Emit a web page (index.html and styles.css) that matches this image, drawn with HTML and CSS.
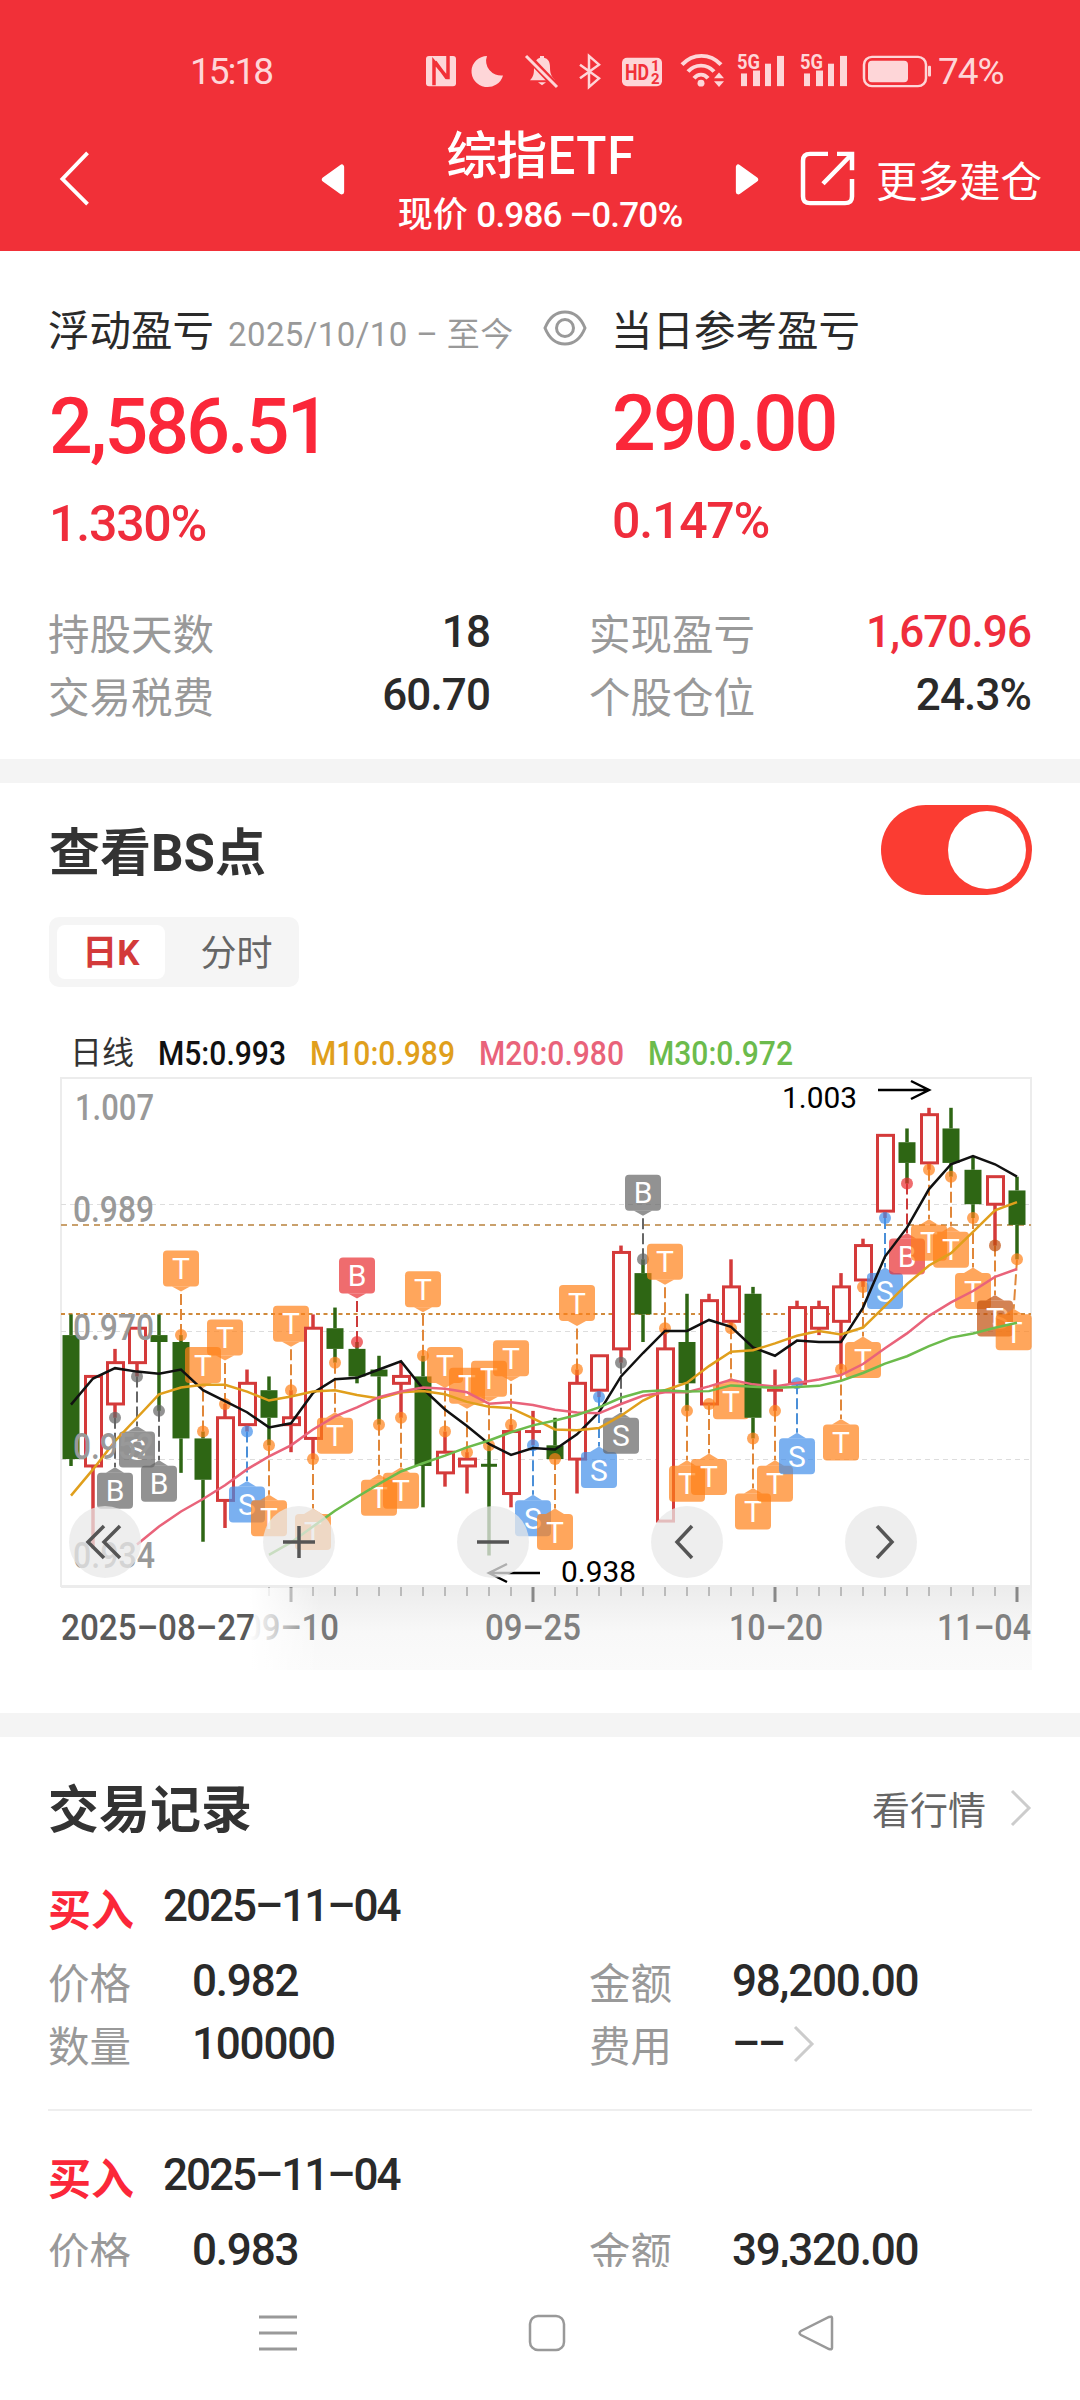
FILE: index.html
```html
<!DOCTYPE html>
<html lang="zh-CN">
<head>
  <meta charset="UTF-8">
  <title>综指ETF</title>
  <link rel="stylesheet" href="styles.css">
</head>
<body>
<div class="screen">
  <header class="header">
    <div class="status">
      <span class="time">15:18</span>
      <svg class="status-icons" width="510" height="39" viewBox="422 54 510 40" preserveAspectRatio="none">
        <g fill="#fed6d8">
          <rect x="426" y="58" width="30" height="31" rx="3"/>
          <path d="M487 58a16 16 0 1 0 16 20a15 15 0 0 1-16-20z"/>
          <path d="M530 83c4-4 4-8 4-13 0-6 3-9 6-10v-2h4v2c4 1 6 4 6 10 0 5 1 9 5 13z"/>
          <path d="M538 85h8l-4 3z"/>
          <rect x="622" y="60" width="40" height="29" rx="5"/>
          <circle cx="701" cy="86" r="3.5"/>
          <path d="M714 81l5-6 5 6zM714 84l5 6 5-6z"/>
          <rect x="741" y="76" width="6" height="13"/><rect x="753" y="73" width="7" height="16"/><rect x="765" y="66" width="6" height="23"/><rect x="777" y="58" width="7" height="31"/>
          <rect x="804" y="76" width="6" height="13"/><rect x="816" y="73" width="7" height="16"/><rect x="828" y="66" width="6" height="23"/><rect x="840" y="58" width="7" height="31"/>
          <rect x="868" y="63" width="40" height="22" rx="4"/>
          <rect x="928" y="68" width="3" height="11" rx="1"/>
        </g>
        <g fill="none" stroke="#fed6d8" stroke-width="3">
          <path d="M580 67l19 14-10 9V58l10 9-19 14" stroke-width="2.5"/>
          <path d="M682 67c11-12 28-12 39 0M688 74c7-8 19-8 26 0M694 81c4-5 10-5 14 0" stroke-width="4"/>
          <rect x="864" y="59" width="62" height="30" rx="8" stroke-width="2.5"/>
        </g>
        <path d="M528 59l29 31" stroke="#f13038" stroke-width="7"/>
        <path d="M526 58l31 32" stroke="#fed6d8" stroke-width="3"/>
        <path d="M434 88V64l13 16M448 58v24M435 64l12 17" fill="none" stroke="#f13038" stroke-width="3.5"/>
        <g class="tiny-text" fill="#f13038">
          <text x="625" y="83" font-size="23" textLength="24" lengthAdjust="spacingAndGlyphs">HD</text>
          <text x="651" y="74" font-size="15">1</text>
          <text x="651" y="87" font-size="15">2</text>
        </g>
        <g class="tiny-text" fill="#fed6d8" font-size="20">
          <text x="737" y="71" textLength="23" lengthAdjust="spacingAndGlyphs">5G</text>
          <text x="800" y="71" textLength="23" lengthAdjust="spacingAndGlyphs">5G</text>
        </g>
      </svg>
      <span class="battery">74%</span>
    </div>
    <nav class="navbar">
      <svg class="back" width="32" height="56" viewBox="0 0 32 58"><path d="M29 2L3 29l26 26" fill="none" stroke="#fff" stroke-width="4"/></svg>
      <svg class="prev" width="24" height="31" viewBox="0 0 24 32"><path d="M21 3v26L3 16z" fill="#fff" stroke="#fff" stroke-width="5" stroke-linejoin="round"/></svg>
      <div class="stock">
        <h1>综指ETF</h1>
        <p>现价 <span>0.986 –0.70%</span></p>
      </div>
      <svg class="next" width="24" height="31" viewBox="0 0 24 32"><path d="M3 3v26l18-13z" fill="#fff" stroke="#fff" stroke-width="5" stroke-linejoin="round"/></svg>
      <svg class="share" width="56" height="56" viewBox="0 0 56 58" preserveAspectRatio="none"><path d="M28 3H10q-7 0-7 7v37q0 7 7 7h35q7 0 7-7V29M37 3h15v17M52 3L23 34" fill="none" stroke="#fff" stroke-width="4.5"/></svg>
      <span class="more">更多建仓</span>
    </nav>
  </header>

  <section class="summary">
    <div class="profit">
      <div class="profit-col">
        <div class="profit-title">浮动盈亏 <small><span>2025/10/10 –</span> 至今</small>
          <svg width="44" height="38" viewBox="0 0 44 38" fill="none" stroke="#999" stroke-width="3"><path d="M2 19C6 9 13 3 22 3s16 6 20 16c-4 10-11 16-20 16S6 29 2 19z"/><circle cx="22" cy="19" r="8.500"/></svg>
        </div>
        <div class="amount">2,586.51</div>
        <div class="rate">1.330%</div>
      </div>
      <div class="profit-col today">
        <div class="profit-title">当日参考盈亏</div>
        <div class="amount">290.00</div>
        <div class="rate">0.147%</div>
      </div>
    </div>
    <div class="details">
      <div class="detail"><span>持股天数</span><b>18</b></div>
      <div class="detail"><span>实现盈亏</span><b class="red">1,670.96</b></div>
      <div class="detail"><span>交易税费</span><b>60.70</b></div>
      <div class="detail"><span>个股仓位</span><b>24.3%</b></div>
    </div>
  </section>

  <section class="bs">
    <div class="bs-head">
      <h2>查看BS点</h2>
      <div class="switch"><i></i></div>
    </div>
    <div class="tabs">
      <span class="tab active">日K</span>
      <span class="tab">分时</span>
    </div>
    <svg id="chart" class="chart" width="984" height="650" viewBox="49 1030 984 650"></svg>
  </section>

  <section class="trades">
    <div class="trades-head">
      <h2>交易记录</h2>
      <span>看行情</span>
      <svg width="22" height="38" viewBox="0 0 22 38"><path d="M2 2l17 17L2 36" fill="none" stroke="#ccc" stroke-width="3"/></svg>
    </div>
    <div class="trade">
      <div class="trade-title"><strong>买入</strong><span>2025–11–04</span></div>
      <div class="trade-grid">
        <span>价格</span><b>0.982</b><span>金额</span><b>98,200.00</b>
        <span>数量</span><b>100000</b><span>费用</span><b class="fee">–– <svg width="22" height="38" viewBox="0 0 22 38"><path d="M2 2l17 17L2 36" fill="none" stroke="#ccc" stroke-width="3"/></svg></b>
      </div>
    </div>
    <div class="trade">
      <div class="trade-title"><strong>买入</strong><span>2025–11–04</span></div>
      <div class="trade-grid">
        <span>价格</span><b>0.983</b><span>金额</span><b>39,320.00</b>
      </div>
    </div>
  </section>

  <footer class="system-nav">
    <svg width="38" height="38" viewBox="0 0 38 38"><path d="M0 3h38M0 19h38M0 35h38" stroke="#999" stroke-width="3"/></svg>
    <svg width="38" height="38" viewBox="0 0 38 38"><rect x="2" y="2" width="34" height="34" rx="8" fill="none" stroke="#999" stroke-width="2.500"/></svg>
    <svg width="38" height="38" viewBox="0 0 38 38"><path d="M35 4v30q0 2-3 1L4 21q-3-2 0-4L32 3q3-1 3 1z" fill="none" stroke="#999" stroke-width="2.500"/></svg>
  </footer>
</div>
<script src="chart.js"></script>
</body>
</html>
```
FILE: styles.css
```css
* {
  box-sizing: border-box;
}
body {
  margin: 0;
  background: #fff;
  color: #2a2a2a;
  font-family: Roboto, "Noto Sans CJK SC", sans-serif;
}
h1, h2, p {
  margin: 0;
}
svg {
  flex: none;
}
.screen {
  width: 1080px;
  height: 2400px;
  overflow: hidden;
  display: flex;
  flex-direction: column;
}

/* header */
.header {
  flex: none;
  height: 251px;
  background: #f13038;
  color: #fff;
}
.status {
  display: flex;
  align-items: center;
  height: 119px;
  padding: 24px 0 0 190px;
  color: #fed6d8;
  font-size: 37px;
}
.time {
  width: 232px;
  letter-spacing: -2px;
}
.battery {
  margin-left: 6px;
  letter-spacing: -1px;
}
.tiny-text {
  font-weight: 700;
}
.navbar {
  display: flex;
  align-items: center;
  height: 120px;
  padding-left: 59px;
}
.prev {
  margin-left: 230px;
}
.stock {
  width: 390px;
  text-align: center;
  white-space: nowrap;
}
.stock h1 {
  height: 66px;
  font: 500 51px/62px "Noto Sans CJK SC", sans-serif;
  letter-spacing: -1px;
}
.stock p {
  height: 50px;
  line-height: 58px;
  font-size: 35px;
  font-weight: 500;
}
.stock p span {
  letter-spacing: -.8px;
}
.share {
  margin-left: 41px;
}
.more {
  margin-left: 20px;
  font-size: 41.500px;
  white-space: nowrap;
}

/* profit summary */
.summary {
  flex: none;
  height: 532px;
  padding: 47px 48px 0;
  border-bottom: 24px solid #f4f4f4;
}
.profit {
  display: flex;
  height: 302px;
}
.profit-col {
  flex: none;
  width: 563px;
  white-space: nowrap;
}
.profit-title {
  display: flex;
  align-items: center;
  height: 60px;
  font-size: 41.500px;
}
.profit-title small {
  margin: 8px 0 0 14px;
  color: #999;
  font-size: 33px;
  letter-spacing: .4px;
}
.profit-title svg {
  margin: 0 0 0 29px;
}
.amount {
  height: 135px;
  padding-left: 1px;
  line-height: 139px;
  color: #fb2739;
  font-size: 77px;
  font-weight: 500;
  letter-spacing: -2.800px;
}
.rate {
  height: 60px;
  padding-left: 1px;
  line-height: 62px;
  color: #ef2d3c;
  font-size: 50px;
  font-weight: 500;
  letter-spacing: -1.200px;
}
.today .amount, .today .rate {
  position: relative;
  top: -3px;
}
.details {
  display: grid;
  grid-template-columns: 442px 442px;
  column-gap: 99px;
}
.detail {
  display: flex;
  justify-content: space-between;
  align-items: center;
  height: 63px;
}
.detail span {
  color: #999;
  font-size: 41.500px;
}
.detail b {
  font-size: 44px;
  font-weight: 500;
  letter-spacing: -.900px;
}
.detail .red {
  color: #ef2d3c;
}

/* BS chart */
h2 {
  color: #333;
  font: 700 51px/60px Roboto, "Noto Sans CJK SC", sans-serif;
}
.bs {
  flex: none;
  height: 954px;
  padding: 22px 48px 0 49px;
  border-bottom: 24px solid #f4f4f4;
}
.bs-head {
  display: flex;
  justify-content: space-between;
  align-items: center;
  height: 90px;
}
.bs-head h2 {
  padding-top: 7px;
}
.switch {
  width: 151px;
  height: 90px;
  padding: 6px;
  border-radius: 45px;
  background: #fb3c32;
}
.switch i {
  display: block;
  width: 78px;
  height: 78px;
  margin-left: auto;
  border-radius: 50%;
  background: #fff;
}
.tabs {
  display: flex;
  width: 250px;
  height: 70px;
  margin: 22px 0 43px;
  padding: 8px;
  border-radius: 10px;
  background: #f5f5f5;
}
.tab {
  flex: 1;
  padding-left: 17px;
  color: #666;
  font-size: 36px;
  line-height: 58px;
  text-align: center;
}
.tab.active {
  flex: none;
  width: 108px;
  padding-left: 0;
  border-radius: 8px;
  background: #fff;
  color: #d33a3a;
  font-size: 35px;
  font-weight: 700;
}
.tab.active {
  height: 54px;
}
.chart {
  display: block;
}

/* trade list */
.trades {
  flex: none;
  height: 530px;
  padding: 0 48px;
  overflow: hidden;
}
.trades-head {
  display: flex;
  align-items: center;
  height: 146px;
  padding-bottom: 5px;
}
.trades-head h2 {
  flex: 1;
  padding-top: 7px;
}
.trades-head span {
  margin-right: 24px;
  color: #666;
  font-size: 38px;
}
.trade {
  height: 269px;
}
.trade + .trade {
  border-top: 2px solid #eee;
  margin-top: -43px;
  padding-top: 41px;
}
.trade-title {
  display: flex;
  align-items: center;
  height: 48px;
  font-size: 44px;
}
.trade-title strong {
  width: 115px;
  color: #fb2739;
  font-size: 43px;
}
.trade-title span {
  padding-bottom: 2px;
  font-weight: 500;
  letter-spacing: -2px;
}
.trade-grid {
  display: grid;
  grid-template-columns: 144px 397px 143px auto;
  grid-auto-rows: 63px;
  align-items: center;
  margin-top: 18px;
}
.trade-grid span {
  color: #999;
  font-size: 41.500px;
}
.trade-grid b {
  font-size: 44px;
  font-weight: 500;
  letter-spacing: -1.200px;
}
.fee {
  display: flex;
  align-items: center;
  gap: 9px;
}
.trade-grid .fee {
  letter-spacing: -2.500px;
}

/* android navigation */
.system-nav {
  display: flex;
  gap: 231px;
  padding: 47px 0 0 259px;
}
```
FILE: chart.js
```js
// high, open, close, low in 0.001; open > close is a falling day
const candles = [
  [973, 970, 952, 951], [964, 951, 964, 939], [968, 960, 966, 958], [971, 966, 971, 964],
  [973, 970, 969, 959], [970, 969, 955, 950], [956, 955, 949, 940], [960, 946, 958, 942],
  [965, 957, 963, 956], [964, 962, 958, 954], [962, 957, 958, 953], [973, 955, 971, 952],
  [974, 971, 968, 966], [969, 968, 964, 963], [967, 965, 964, 957], [966, 963, 964, 958],
  [967, 964, 951, 945], [956, 950, 953, 948], [953, 951, 952, 947], [954, 951.1, 951, 938],
  [957, 947, 956, 945], [959, 956, 956, 954], [958, 954, 952, 952], [965, 952, 963, 947],
  [967, 962, 967, 961], [983, 968, 982, 966], [981, 979, 973, 969], [971, 943, 968, 943],
  [976, 969, 963, 959], [976, 960, 975, 960], [981, 972, 977, 971], [977, 976, 958, 955],
  [965, 962, 962, 959], [975, 963, 974, 963], [975, 971, 974, 970], [979, 972, 977, 965],
  [984, 978, 983, 977], [999, 988, 999, 987], [1000, 998, 995, 992], [1003, 995, 1002, 994],
  [1003, 1000, 995, 993], [996, 994, 989, 987], [993, 989, 993, 983], [993, 991, 986, 981]
];

// index: letter + color + side (u = above the high, d = below the low)
const marks = {
  2: "Bgd", 3: "Sgd", 4: "Bgd", 5: "Tou", 6: "Tou", 7: "Tou", 8: "Sbd", 9: "Tod", 10: "Tou",
  11: "Tod", 12: "Tod", 13: "Bru", 14: "Tod", 15: "Tod", 16: "Tou", 17: "Tou", 18: "Tou",
  19: "Tou", 20: "Tou", 21: "Sbd", 22: "Tod", 23: "Tou", 24: "Sbd", 25: "Sgd", 26: "Bgu",
  27: "Tou", 28: "Tod", 29: "Tod", 30: "Tod", 31: "Tod", 32: "Tod", 33: "Sbd", 35: "Tod",
  36: "Tod", 37: "Sbd", 38: "Brd", 39: "Tod", 40: "Tod", 41: "Tod", 42: "Tmd", 43: "Tod"
};
const colors = {
  o: ["#ff8017", "#e0873a"], r: ["#e82e30", "#cc3a3a"], g: ["#646464", "#666"],
  b: ["#418eea", "#4a8fd8"], m: ["#c04e0c", "#e0873a"]
};

// first average values, which need closes from before the visible range
const averages = [
  { days: 5, color: "#111", start: 0, lead: [959.9, 963.7, 965.2, 964.7] },
  { days: 10, color: "#e09f1c", start: 0, lead: [946.7, 950.5, 954.6, 958, 961.4, 962.4, 962.8, 962.8, 961.8] },
  { days: 20, color: "#e9637a", start: 3, lead: [939.6, 942.2, 944.4, 946.2, 948.2, 950.5, 952.4, 954, 956.3, 958.2, 959.5, 961, 961.8, 962.4, 962.2, 961.7] },
  { days: 30, color: "#6cbb4c", start: 9, lead: [938.1, 939.9, 942.2, 944.5, 946.5, 948.4, 950.2, 951.4, 952.5, 953.7, 954.7, 955.9, 956.9, 957.6, 958.4, 959.5, 960.9, 961.8, 962, 961.8] }
];

const x = i => 71 + 22 * i;
const y = p => 1107.8 + (1003 - p) * 6.888;
let out = "";

function line(x1, y1, x2, y2, color, width, dash) {
  out += `<line x1="${x1}" y1="${y1}" x2="${x2}" y2="${y2}" stroke="${color}" stroke-width="${width}"${dash ? ` stroke-dasharray="${dash}"` : ""}/>`;
}

function text(str, tx, ty, size, width, color, weight) {
  out += `<text x="${tx}" y="${ty}" font-size="${size}" font-weight="${weight || 500}" fill="${color}" textLength="${width}" lengthAdjust="spacingAndGlyphs">${str}</text>`;
}

function drawFrame() {
  out += `<defs>
    <linearGradient id="axis" x2="0" y2="1"><stop stop-color="#ececec"/><stop offset=".55" stop-color="#f8f8f8"/><stop offset="1" stop-color="#fafafa"/></linearGradient>
    <linearGradient id="fade"><stop stop-color="#fff"/><stop offset=".73" stop-color="#fff"/><stop offset=".82" stop-color="#fff" stop-opacity=".7"/><stop offset="1" stop-color="#fff" stop-opacity="0"/></linearGradient>
  </defs>`;
  text("日线", 70, 1064, 32, 64, "#333", 400);
  text("M5:0.993", 158, 1065, 33, 128, "#111");
  text("M10:0.989", 310, 1065, 33, 145, "#e09f1c");
  text("M20:0.980", 479, 1065, 33, 145, "#e9637a");
  text("M30:0.972", 648, 1065, 33, 145, "#6cbb4c");
  out += `<rect x="61" y="1078" width="970" height="508" fill="none" stroke="#ececec" stroke-width="2"/>`;
  [1204.5, 1331.5, 1459.5].forEach(gy => line(61, gy, 1031, gy, "#ddd", 1, "5 4"));
  line(61, 1225, 1031, 1225, "#c9a06c", 2, "6 5");
  line(61, 1314, 1031, 1314, "#d08a3c", 2, "4 3.5");
}

function drawCandle(c, i) {
  const [high, open, close, low] = c;
  const up = close >= open;
  const color = up ? "#d43a3a" : "#2e6614";
  const top = y(Math.max(open, close));
  const bottom = y(Math.min(open, close));
  line(x(i), y(high), x(i), top, color, 3.5);
  line(x(i), bottom, x(i), y(low), color, 3.5);
  if (bottom - top < 2) {
    line(x(i) - 8, top, x(i) + 8, top, color, 3);
  } else if (up) {
    out += `<rect x="${x(i) - 7.5}" y="${top}" width="16" height="${bottom - top}" fill="#fff" stroke="${color}" stroke-width="3"/>`;
  } else {
    out += `<rect x="${x(i) - 8.5}" y="${top}" width="17" height="${bottom - top}" fill="${color}"/>`;
  }
}

function drawMark(mark, i) {
  const [letter, tone, side] = mark;
  const [fill, dash] = colors[tone];
  const above = side === "u";
  const dot = y(candles[i][above ? 0 : 3]);
  const top = above ? dot - 84.5 : dot + 55;
  const cx = Math.min(x(i), 1013.7);
  const tip = above ? dot - 43.5 : dot + 49.5;
  const base = above ? top + 36 : top;
  line(x(i), dot, cx, tip, dash, 2, "11 4");
  out += `<circle cx="${x(i)}" cy="${dot}" r="6" fill="${fill}" opacity=".7"/>`;
  out += `<path d="M${cx - 9} ${base}L${cx} ${tip}L${cx + 9} ${base}z" fill="${fill}" opacity=".7"/>`;
  out += `<rect x="${cx - 18}" y="${top}" width="36" height="36" rx="4" fill="${fill}" opacity=".7"/>`;
  if (tone === "m") {
    out += `<text x="${cx + 5}" y="${top + 28.5}" font-size="29" text-anchor="middle" fill="#f6b98c">S</text>`;
  }
  out += `<text x="${cx}" y="${top + 28.5}" font-size="30" text-anchor="middle" fill="#fff">${letter}</text>`;
}

function drawAverage(avg) {
  const points = avg.lead.map((v, k) => [x(avg.start + k), y(v)]);
  for (let i = avg.days - 1; i < candles.length; i++) {
    const sum = candles.slice(i - avg.days + 1, i + 1).reduce((s, c) => s + c[2], 0);
    points.push([x(i), y(sum / avg.days)]);
  }
  out += `<polyline points="${points.join(" ")}" fill="none" stroke="${avg.color}" stroke-width="2.5"/>`;
}

function drawAxis() {
  out += `<rect x="61" y="1587" width="971" height="83" fill="url(#axis)"/>`;
  for (let i = 9; i < 44; i++) {
    const major = i % 11 === 10;
    line(x(i), 1587, x(i), major ? 1602 : 1596, "#888", major ? 3 : 1);
  }
  text("09–10", 243, 1640, 36, 96, "#777");
  text("09–25", 485, 1640, 36, 96, "#808080");
  text("10–20", 729, 1640, 36, 94, "#808080");
  text("11–04", 937, 1640, 36, 94, "#808080");
  out += `<rect x="60" y="1588" width="260" height="84" fill="url(#fade)"/>`;
  text("2025–08–27", 61, 1640, 36, 194, "#5a5a5a");
}

function drawLabels() {
  text("1.007", 75, 1120, 36, 79, "#999");
  text("0.989", 73, 1222, 36, 81, "#999");
  text("0.970", 73, 1340, 36, 81, "#999");
  text("0.952", 73, 1459, 36, 81, "#999");
  text("0.934", 73, 1568, 36, 82, "#999");
  text("1.003", 782, 1108, 30, 75, "#000", 400);
  text("0.938", 561, 1582, 30, 75, "#000", 400);
  out += `<path d="M878 1090h50M911 1081l18 9-18 9M540 1573h-50M507 1564l-18 9 18 9" fill="none" stroke="#000" stroke-width="2.5"/>`;
}

function drawButtons() {
  const icons = ["M104 1526l-16 16 16 16M120 1526l-16 16 16 16", "M283 1542h32M299 1526v32", "M477 1542h32", "M692 1526l-15 16 15 16", "M877 1526l15 16-15 16"];
  icons.forEach((d, k) => {
    out += `<circle cx="${105 + 194 * k}" cy="1542" r="36" fill="#e8e8e8" fill-opacity=".75"/>`;
    out += `<path d="${d}" fill="none" stroke="#555" stroke-width="3.5"/>`;
  });
}

drawFrame();
candles.forEach((c, i) => {
  drawCandle(c, i);
  if (marks[i]) drawMark(marks[i], i);
});
averages.forEach(drawAverage);
drawLabels();
drawAxis();
drawButtons();
document.getElementById("chart").innerHTML = out;
```
